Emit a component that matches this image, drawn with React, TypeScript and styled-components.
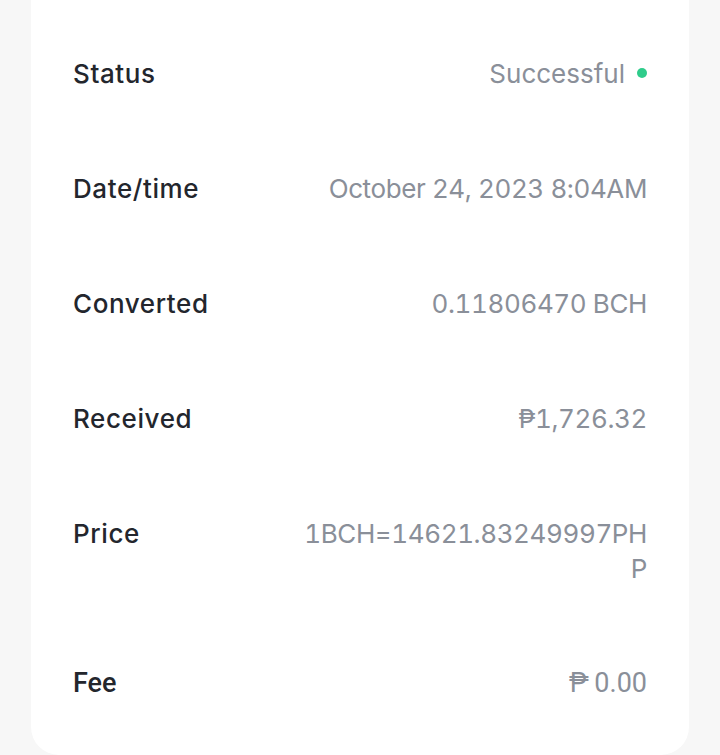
import React from 'react';
import styled, { createGlobalStyle } from 'styled-components';

const GlobalStyle = createGlobalStyle`
  html, body {
    margin: 0;
    padding: 0;
    background: #f7f7f7;
  }
  body {
    font-family: Inter, "Noto Sans", "Liberation Sans", sans-serif;
    -webkit-font-smoothing: antialiased;
  }
`;

const Page = styled.div`
  padding: 0 31px;
  min-height: 755px;
`;

const Card = styled.div`
  background: #ffffff;
  border-radius: 0 0 28px 28px;
  padding: 56px 42px 54px;
  display: flex;
  flex-direction: column;
  gap: 80px;
`;

const Row = styled.div<{ $plain?: boolean }>`
  display: flex;
  justify-content: space-between;
  align-items: flex-start;
  line-height: 35px;
  font-size: ${p => (p.$plain ? '27px' : '26px')};
  font-family: ${p => (p.$plain ? 'Roboto, "Liberation Sans", sans-serif' : 'inherit')};
`;

const Label = styled.span<{ $plain?: boolean }>`
  color: #23262d;
  font-weight: 500;
  letter-spacing: ${p => (p.$plain ? '0' : '0.6px')};
`;

const Value = styled.span<{ $plain?: boolean }>`
  color: #8a8f99;
  text-align: right;
  display: flex;
  flex-direction: column;
  align-items: flex-end;
  font-feature-settings: 'tnum';
  letter-spacing: ${p => (p.$plain ? '0' : '-0.4px')};
`;

const StatusValue = styled.span`
  display: flex;
  align-items: center;
  gap: 12px;
  color: #8a8f99;
`;

const Dot = styled.span<{ $color: string }>`
  width: 10px;
  height: 10px;
  border-radius: 50%;
  background: ${p => p.$color};
  margin-top: -2px;
`;

const details: { label: string; lines: string[]; plain?: boolean }[] = [
  { label: 'Date/time', lines: ['October 24, 2023 8:04AM'] },
  { label: 'Converted', lines: ['0.11806470 BCH'] },
  { label: 'Received', lines: ['₱1,726.32'] },
  { label: 'Price', lines: ['1BCH=14621.83249997PH', 'P'] },
  { label: 'Fee', lines: ['₱\u20090.00'], plain: true },
];

const App: React.FC = () => {
  return (
    <Page>
      <GlobalStyle />
      <Card>
        <Row>
          <Label>Status</Label>
          <StatusValue>
            Successful
            <Dot $color="#2fcc8b" />
          </StatusValue>
        </Row>
        {details.map(d => (
          <Row key={d.label} $plain={d.plain}>
            <Label $plain={d.plain}>{d.label}</Label>
            <Value $plain={d.plain}>
              {d.lines.map(line => (
                <span key={line}>{line}</span>
              ))}
            </Value>
          </Row>
        ))}
      </Card>
    </Page>
  );
};

export default App;
